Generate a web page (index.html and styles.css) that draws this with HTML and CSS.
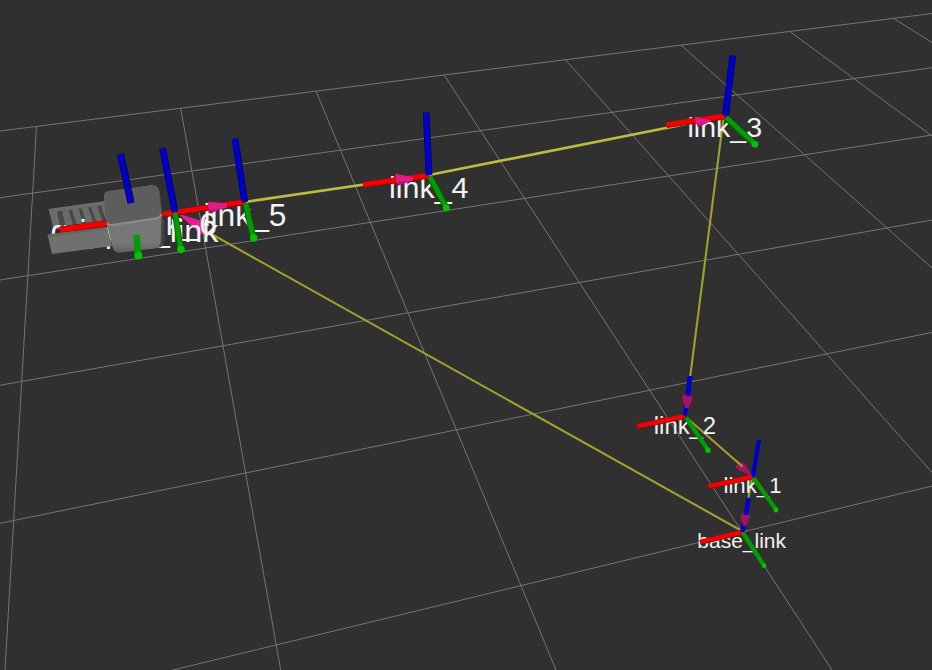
FILE: index.html
```
<!DOCTYPE html>
<html lang="en">
<head>
<meta charset="utf-8">
<title>TF view</title>
<link rel="stylesheet" href="styles.css">
</head>
<body>
<svg class="scene" viewBox="0 0 932 670" width="932" height="670">
  <defs>
    <linearGradient id="cone" x1="0" y1="0" x2="0" y2="1">
      <stop offset="0" stop-color="#d51a80"/><stop offset=".5" stop-color="#e81c8c"/><stop offset="1" stop-color="#8c1056"/>
    </linearGradient>
    <linearGradient id="front" x1="0" y1="0" x2="0" y2="1">
      <stop offset="0" stop-color="#747474"/><stop offset=".85" stop-color="#777"/><stop offset="1" stop-color="#606060"/>
    </linearGradient>
    <linearGradient id="side" x1="0" y1="0" x2="1" y2="0">
      <stop offset="0" stop-color="#666"/><stop offset=".5" stop-color="#5c5c5c"/><stop offset="1" stop-color="#303030"/>
    </linearGradient>
  </defs>

  <g class="grid">
    <path d="M0 131L932 13.5M0 197.7L932 67.7M0 280L932 135M0 385.3L932 220M0 523.3L932 332.4M173 670L932 486"/>
    <path d="M36.5 126.3L5 670M180.7 108.2L280.7 670M316 91.2L556 670M444.3 75.2L832 670M565.5 59.7L932 472.5M681 45.1L932 268M789.7 31.4L932 136M893.5 18.4L932 42.5"/>
  </g>

  <g class="tf">
    <path class="near" d="M245 202L429 175L724 116.5"/>
    <path d="M742 531L206 231M723.5 118L690 378M687 418L743 467M752 478L748 500"/>
  </g>

  <path class="cone-six" d="M178 213.5L205 222Q209 224 207.500 230Q205 235 201 234.500Z"/>

  <g class="finger-back">
    <path d="M48.500 209L104 201.500V222L54 229.500Z" fill="#484848"/>
    <path d="M48.500 209L105 201V205L57 211.500L60.500 229H53.500Z" fill="#6c6c6c"/>
    <path d="M62 211L68.500 210L74 228H66ZM72 209.500L78.500 208.500L84 226.500H77ZM81.500 208L88 207L94 225H87ZM91 207L97.500 206L103 223.500H97ZM101 205.500L106 205V222Z" fill="#6b6b6b"/>
  </g>

  <g class="labels">
    <text x="687.5" y="137" font-size="28" textLength="74.500" lengthAdjust="spacingAndGlyphs">link_3</text>
    <text x="389" y="197.8" font-size="29.5" textLength="79.500" lengthAdjust="spacingAndGlyphs">link_4</text>
    <text x="203.5" y="225.600" font-size="30.5" textLength="83" lengthAdjust="spacingAndGlyphs">link_5</text>
    <text x="134" y="235.300" font-size="31" textLength="83" lengthAdjust="spacingAndGlyphs">link_6</text>
    <text x="50.5" y="242.300" font-size="32" textLength="168" lengthAdjust="spacingAndGlyphs">gripper_link</text>
    <text x="653.8" y="434.400" font-size="23.5" textLength="62.300" lengthAdjust="spacingAndGlyphs">link_2</text>
    <text x="723.5" y="493.300" font-size="22" textLength="58" lengthAdjust="spacingAndGlyphs">link_1</text>
    <text x="697.300" y="547.700" font-size="21" textLength="88.700" lengthAdjust="spacingAndGlyphs">base_link</text>
  </g>

  <g class="axes">
    <g class="x">
      <path class="edge" d="M666.5 125L724 116.5M363 185L430 175.5M150 216.500L246 202"/>
      <path d="M666.5 124.6L724 116.1M363 184.6L430 175.1M150 216L246 201.6"/>
      <path class="edge far" d="M637 426.5L684.5 416.5M708.5 486.7L752 477M700 542.4L741.5 532.5"/>
      <path class="far" d="M637 426.2L684.5 416.2M708.5 486.4L752 476.7M700 542L741.5 532.2"/>
    </g>
    <g class="z">
      <path class="edge" d="M732.7 55.5L725.5 115M426.2 112.5L429 175M235 138.5L244.7 202M162.5 148L175 212"/>
      <path d="M732.5 56L725.3 115M426 113L428.8 175M234.8 139L244.5 202M162.3 148.5L174.8 212"/>
      <path class="far" d="M690 376L685 415.5M759 440L753 477M748.7 498L742.3 532"/>
    </g>
    <g class="y">
      <path class="edge" d="M726 118L754 143.5M429.5 177L446 207M245.5 203.5L253.2 237M175 213L180.5 248"/>
      <path d="M726.3 117.5L754 143M430 176.5L446 207M245.7 203.5L253.2 237M175.2 213L180.5 248"/>
      <path class="far" d="M686 417.5L708 450M753.5 478L776 509.5M743 533L764 565.5"/>
      <g class="caps"><circle cx="755" cy="144.3" r="3.3"/><circle cx="446.3" cy="208" r="3.5"/><circle cx="253.7" cy="238" r="3.7"/><circle cx="181" cy="249.3" r="3.8"/><circle cx="708" cy="450.3" r="2.7"/><circle cx="776" cy="510" r="2.5"/><circle cx="764.2" cy="565.8" r="2.3"/></g>
    </g>
  </g>

  <g fill="url(#cone)">
    <path d="M208 201.5L227 203.5L227 207.5L209 213.5Z"/>
    <path d="M395 173.8L413 177L413 180.5L397 186Z"/>
    <path d="M695 116.5L712 120.5L698 127.5Q695 121 695 116.5Z"/>
  </g>
  <g class="cones-dark">
    <path d="M682.200 396Q687 391.500 692.200 396Q693 399 688.500 408H685.300L682.500 400Z"/>
    <path d="M740.300 515Q745 511 749.500 515Q750 519 745.500 526H743.500L741 519Z"/>
    <path d="M736.500 468Q735.500 463 741 462L745.500 464.500L752.500 476.500L740 470.500Z"/>
  </g>
  <path class="blue-tip" d="M690.200 376L688 396M748.700 498L746 515"/>
  <path class="tf-tip" d="M736 460.800L742.500 466.500"/>

  <g class="gripper">
    <path class="finger-edge" d="M60 230L108 223.500"/>
    <path class="finger-axis" d="M60 229.600L108 223"/>
    <path d="M47.5 234.5L107 227L112 246L52 254Z" fill="#707070"/>
    <path d="M47.5 234.5L107 227V229L49 237Z" fill="#646464"/>
    <path d="M150 185Q158 184.500 159.500 191L166 238Q166.500 246 158 248L150 249Z" fill="url(#side)"/>
    <path d="M104 197Q103.500 192 109 191L151 185.500Q157 185 158 190L161.500 215L160.500 242Q160 247.500 154 248.500L120 252.700Q114 253 112.500 247L107 225Z" fill="url(#front)"/>
    <path d="M104 197Q103.500 192 109 191L151 185.500Q157 185 158 190L161 213Q161 217 155 218L111 224Q106 224 105.500 218Z" fill="#5d5d5d"/>
    <path class="ridge" d="M107 223.500Q109 225.500 113 225L155 218.500Q161 217.500 161 214"/>
    <path class="gz" d="M120.500 154L131 203"/>
    <path class="gz-core" d="M120.300 154.500L130.800 203"/>
    <path class="gy" d="M136.500 235L138 255"/>
    <circle class="cap" cx="138.300" cy="255.500" r="4"/>
  </g>
</svg>
</body>
</html>
```
FILE: styles.css
```
body {
  margin: 0;
  background: #303030;
  overflow: hidden;
}
.scene { display: block; }
.grid { stroke: #757575; stroke-width: 1; fill: none; }
.labels { fill: #f2f2f2; font-family: "Liberation Sans", Arial, sans-serif; }
.tf path { fill: none; stroke: #a0a02e; stroke-width: 2.1; }
.tf .near { stroke: #bcbc3e; stroke-width: 2.6; }
.axes path { fill: none; stroke-width: 4.6; }
.axes .edge { stroke-width: 6.2; }
.axes .far { stroke-width: 4.3; }
.axes .edge.far { stroke-width: 5; }
.x path { stroke: #f20000; }
.x .edge { stroke: #9a0000; }
.z path { stroke: #0000c8; }
.z .edge { stroke: #000085; stroke-width: 6.8; }
.y path { stroke: #009c00; }
.y .edge { stroke: #006a00; }
.caps, .gripper .cap { fill: #00c400; }
.cone-six { fill: #e81c8c; }
.cones-dark { fill: #a81264; }
.blue-tip { stroke: #0000c8; stroke-width: 4.3; }
.tf-tip { stroke: #a0a02e; stroke-width: 2.1; }
.finger-edge { stroke: #9a0000; stroke-width: 7; }
.finger-axis { stroke: #f20000; stroke-width: 5.2; }
.ridge { fill: none; stroke: #8c8c8c; stroke-width: 2; }
.gz { stroke: #000085; stroke-width: 7.2; }
.gz-core { stroke: #0000c0; stroke-width: 5; }
.gy { stroke: #009c00; stroke-width: 6.5; }
```
